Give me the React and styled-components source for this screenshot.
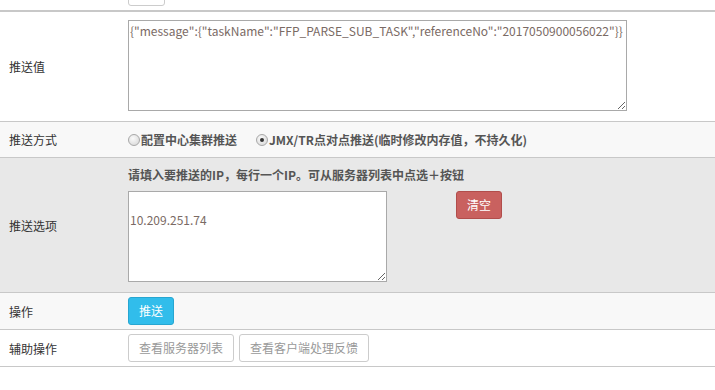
import React from "react";
import styled, { createGlobalStyle } from "styled-components";

const GlobalStyle = createGlobalStyle`
    html, body {
        margin: 0;
        padding: 0;
        background: #fff;
    }
    body {
        font-family: "Noto Sans CJK SC", "Noto Sans", sans-serif;
        font-size: 12px;
        color: #333;
        overflow: hidden;
    }
`;

const Table = styled.div`
    width: 100%;
    margin-top: -26px;
`;

const Row = styled.div`
    display: grid;
    grid-template-columns: 120px 1fr;
    align-items: center;
    min-height: 36px;
    background: ${(p) => p.$bg || "#fff"};
    border-bottom: ${(p) => (p.$thick ? "2px" : "1px")} solid #c8c8c8;
    box-sizing: border-box;
`;

const Label = styled.div`
    padding-left: 9px;
    font-size: 12px;
    color: #333;
`;

const Cell = styled.div`
    padding: ${(p) => p.$pad || "4px 8px"};
    display: flex;
    flex-direction: ${(p) => (p.$column ? "column" : "row")};
    align-items: ${(p) => (p.$column ? "flex-start" : "center")};
    gap: ${(p) => p.$gap || "0"};
`;

const TextArea = styled.textarea`
    display: block;
    box-sizing: border-box;
    width: ${(p) => p.$w}px;
    height: ${(p) => p.$h}px;
    margin: 0;
    padding: 1px 1px;
    border: 1px solid #a9a9a9;
    font-family: "Noto Sans CJK SC", "Noto Sans", sans-serif;
    font-size: 12px;
    line-height: 18px;
    color: #7a6a64;
    background: #fff;
    resize: both;
    outline: none;
`;

const Btn = styled.button`
    box-sizing: border-box;
    height: 28px;
    width: ${(p) => (p.$w ? `${p.$w}px` : "auto")};
    padding: 0 10px;
    border-radius: 3px;
    font-family: "Noto Sans CJK SC", "Noto Sans", sans-serif;
    font-size: 12px;
    line-height: 26px;
    cursor: pointer;
    border: 1px solid ${(p) => p.$border};
    background: ${(p) => p.$bg};
    color: ${(p) => p.$color};
`;

const RadioGroup = styled.div`
    display: flex;
    align-items: center;
    gap: 19px;
`;

const RadioLabel = styled.label`
    display: flex;
    align-items: center;
    font-weight: bold;
    color: #555;
    font-size: 12px;
`;

const Radio = styled.span`
    width: 12px;
    height: 12px;
    box-sizing: border-box;
    border-radius: 50%;
    border: 1px solid #a8a8a8;
    background: radial-gradient(circle at 40% 35%, #fafafa, #d4d4d4);
    display: flex;
    align-items: center;
    justify-content: center;
    margin-right: 1px;

    &::after {
        content: "";
        width: 4px;
        height: 4px;
        border-radius: 50%;
        background: ${(p) => (p.$checked ? "#333" : "transparent")};
    }
`;

const Hint = styled.div`
    font-weight: bold;
    color: #555;
    line-height: 18px;
`;

const OptionRow = styled.div`
    display: flex;
    align-items: flex-start;
    gap: 69px;
`;

const ButtonRow = styled.div`
    display: flex;
    gap: 5px;
`;

export default function App() {
    return (
        <>
            <GlobalStyle />
            <Table>
                <Row $thick>
                    <Label />
                    <Cell>
                        <Btn $w={37} $bg="#fff" $border="#ccc" $color="#999" />
                    </Cell>
                </Row>
                <Row>
                    <Label>推送值</Label>
                    <Cell $pad="8px 8px 10px">
                        <TextArea
                            $w={499}
                            $h={91}
                            defaultValue={'{"message":{"taskName":"FFP_PARSE_SUB_TASK","referenceNo":"2017050900056022"}}'}
                        />
                    </Cell>
                </Row>
                <Row $bg="#f8f8f8">
                    <Label>推送方式</Label>
                    <Cell>
                        <RadioGroup>
                            <RadioLabel>
                                <Radio />
                                配置中心集群推送
                            </RadioLabel>
                            <RadioLabel>
                                <Radio $checked />
                                JMX/TR点对点推送(临时修改内存值，不持久化)
                            </RadioLabel>
                        </RadioGroup>
                    </Cell>
                </Row>
                <Row $bg="#e8e8e8">
                    <Label>推送选项</Label>
                    <Cell $column $pad="8px 8px 10px" $gap="7px">
                        <Hint>请填入要推送的IP，每行一个IP。可从服务器列表中点选＋按钮</Hint>
                        <OptionRow>
                            <TextArea $w={259} $h={91} defaultValue={"\n10.209.251.74"} />
                            <Btn $bg="#c9615f" $border="#b14d4b" $color="#fff">
                                清空
                            </Btn>
                        </OptionRow>
                    </Cell>
                </Row>
                <Row $bg="#f8f8f8">
                    <Label>操作</Label>
                    <Cell>
                        <Btn $bg="#31bdeb" $border="#27a6d1" $color="#fff">
                            推送
                        </Btn>
                    </Cell>
                </Row>
                <Row>
                    <Label>辅助操作</Label>
                    <Cell>
                        <ButtonRow>
                            <Btn $bg="#fff" $border="#ccc" $color="#999">
                                查看服务器列表
                            </Btn>
                            <Btn $bg="#fff" $border="#ccc" $color="#999">
                                查看客户端处理反馈
                            </Btn>
                        </ButtonRow>
                    </Cell>
                </Row>
            </Table>
        </>
    );
}
